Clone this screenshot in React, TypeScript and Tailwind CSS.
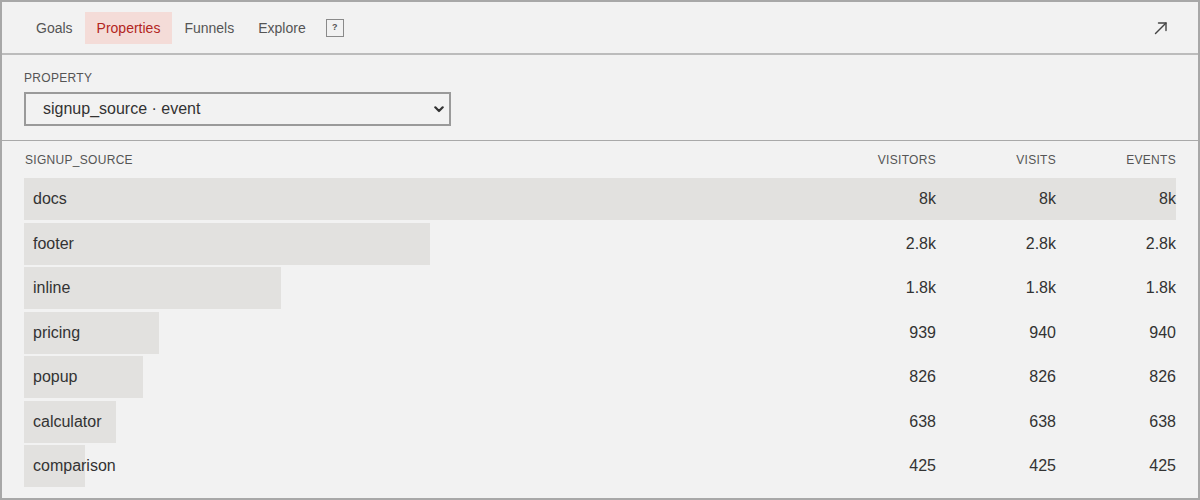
import React from "react";

const rows = [
  { name: "docs", visitors: "8k", visits: "8k", events: "8k", v: 8000 },
  { name: "footer", visitors: "2.8k", visits: "2.8k", events: "2.8k", v: 2820 },
  { name: "inline", visitors: "1.8k", visits: "1.8k", events: "1.8k", v: 1785 },
  { name: "pricing", visitors: "939", visits: "940", events: "940", v: 939 },
  { name: "popup", visitors: "826", visits: "826", events: "826", v: 826 },
  { name: "calculator", visitors: "638", visits: "638", events: "638", v: 638 },
  { name: "comparison", visitors: "425", visits: "425", events: "425", v: 425 },
];

const max = 8000;

export default function App() {
  return (
    <div
      className="w-[1200px] h-[500px] border-2 border-[#a8a8a8] bg-[#f2f2f2] flex flex-col text-[#333] overflow-hidden"
      style={{ fontFamily: '"Liberation Sans", Arial, sans-serif' }}
    >
      {/* Header tabs */}
      <div className="h-[53px] shrink-0 flex items-center pl-[22px] pr-[30px] border-b-2 border-[#bcbcbc]">
        <div className="flex items-center text-[14px] leading-[20px] text-[#555]">
          <div className="px-3 py-[6px]">Goals</div>
          <div className="px-3 py-[6px] bg-[#f4dcd8] text-[#b3261e] font-medium">Properties</div>
          <div className="px-3 py-[6px]">Funnels</div>
          <div className="px-3 py-[6px]">Explore</div>
          <div className="ml-[8px] w-[18px] h-[18px] border-[1.5px] border-[#8a8a8a] flex items-center justify-center text-[9px] leading-none font-bold text-[#555]">
            ?
          </div>
        </div>
        <div className="ml-auto">
          <svg width="14" height="14" viewBox="0 0 14 14" fill="none" stroke="#444" strokeWidth="1.4" strokeLinecap="round" strokeLinejoin="round">
            <path d="M1.5 12.5 L12 2" />
            <path d="M4.5 2 H12 V9.5" />
          </svg>
        </div>
      </div>

      {/* Property selector */}
      <div className="shrink-0 px-[22px] pt-[15px] pb-[14px] border-b border-[#a9a9a9]">
        <div className="text-[12px] leading-[16px] tracking-wide text-[#555] uppercase">Property</div>
        <div className="relative mt-[6px] w-[427px] h-[34px]">
          <select
            className="appearance-none w-full h-full border-2 border-[#9a9a9a] bg-[#f2f2f2] pl-[17px] pr-8 text-[16px] leading-[20px] text-[#333] outline-none rounded-none"
            style={{ fontFamily: '"Liberation Sans", Arial, sans-serif' }}
            defaultValue="signup_source"
          >
            <option value="signup_source">signup_source · event</option>
          </select>
          <svg
            className="absolute right-[7px] top-[14px] pointer-events-none"
            width="10"
            height="7"
            viewBox="0 0 10 7"
            fill="none"
            stroke="#333"
            strokeWidth="2.2"
            strokeLinecap="round"
            strokeLinejoin="round"
          >
            <path d="M1.3 1.3 L5 5 L8.7 1.3" />
          </svg>
        </div>
      </div>

      {/* Table */}
      <div className="flex-1 px-[22px] pt-[11px]">
        <div className="grid grid-cols-[1fr_120px_120px_120px] text-[12px] leading-[16px] tracking-wide text-[#555] uppercase">
          <div className="pl-[1px]">signup_source</div>
          <div className="text-right">Visitors</div>
          <div className="text-right">Visits</div>
          <div className="text-right">Events</div>
        </div>
        <div className="mt-[10px] flex flex-col gap-[2.5px]">
          {rows.map((r) => (
            <div key={r.name} className="relative h-[42px] grid grid-cols-[1fr_120px_120px_120px] items-center text-[16px] leading-[20px]">
              <div
                className="absolute left-0 top-0 bottom-0 bg-[#e2e1df]"
                style={{ width: `${(r.v / max) * 100}%` }}
              />
              <div className="relative pl-[9px]">{r.name}</div>
              <div className="relative text-right">{r.visitors}</div>
              <div className="relative text-right">{r.visits}</div>
              <div className="relative text-right">{r.events}</div>
            </div>
          ))}
        </div>
      </div>
    </div>
  );
}
